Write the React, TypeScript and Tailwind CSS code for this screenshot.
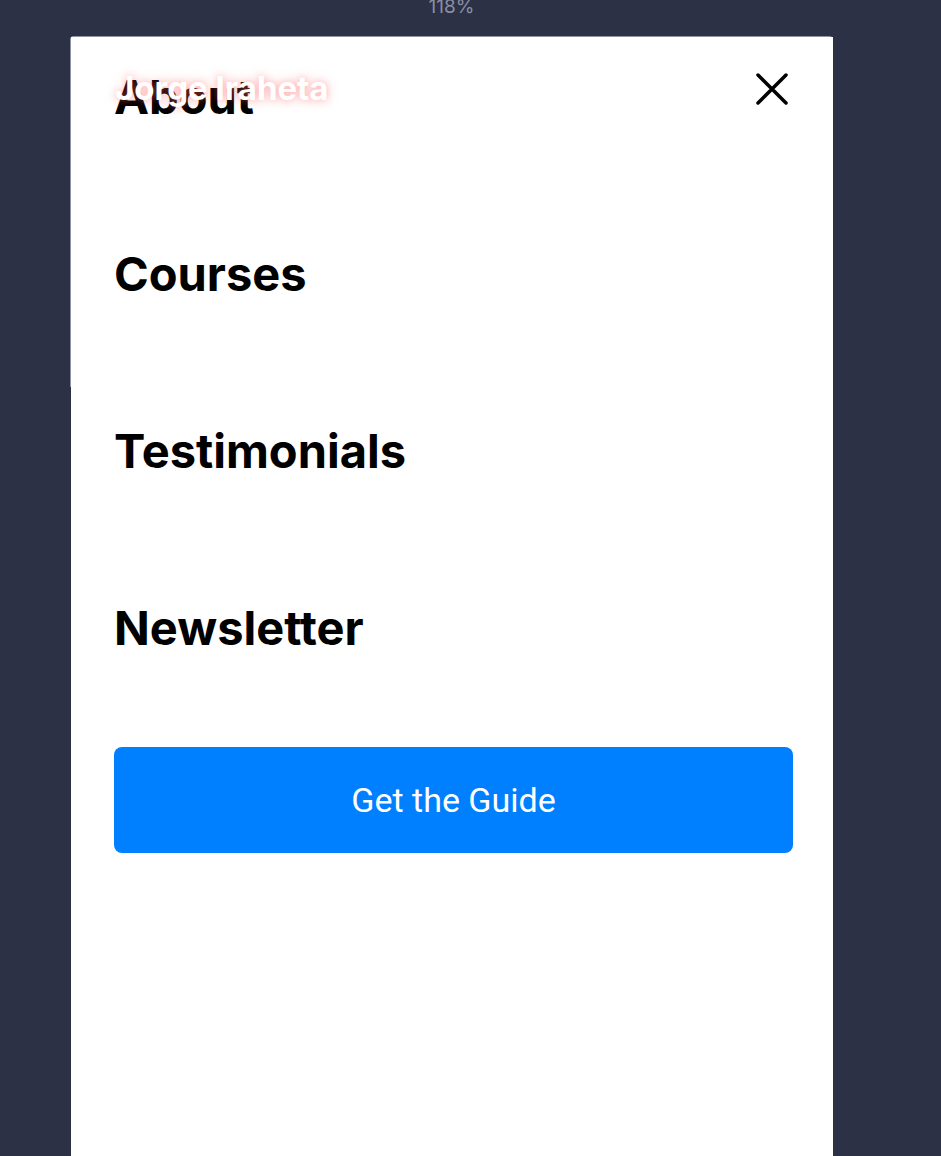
import React from "react";

export default function App() {
  const items = ["About", "Courses", "Testimonials", "Newsletter"];
  return (
    <div className="h-[1156px] w-full bg-[#2c3146] overflow-hidden relative" style={{ fontFamily: "Inter, 'Noto Sans', sans-serif" }}>
      <div className="h-[36px] flex justify-center pr-[38px]">
        <span className="text-[19px] leading-[19px] text-[#8a8fa3] -mt-[3px]">118%</span>
      </div>
      <div className="relative ml-[70px] w-[763px] h-[351px] rounded-t-[4px] border border-b-0 border-[#8d93a5] bg-white">
        <div className="absolute left-0 top-0 w-[762px] h-[1200px] bg-white pl-[43px] pr-[40px] pt-[32px]">
          <nav className="flex flex-col gap-[121px]">
            {items.map((t) => (
              <div key={t} className="text-[47px] leading-[56px] font-bold text-black">{t}</div>
            ))}
          </nav>
          <button className="mt-[91px] w-full h-[106px] rounded-[8px] bg-[#0080ff] text-white text-[34px]" style={{ fontFamily: "Roboto, sans-serif" }}>
            Get the Guide
          </button>
        </div>
        <div
          className="absolute left-[44px] top-[31px] text-[33px] leading-[40px] font-bold text-white"
          style={{ textShadow: "0 0 12px rgba(255,70,70,0.35), 0 0 6px rgba(255,120,120,0.35)" }}
        >
          Jorge Iraheta
        </div>
        <svg className="absolute left-[684px] top-[35px]" width="34" height="34" viewBox="0 0 34 34" fill="none" stroke="black" strokeWidth="3.5" strokeLinecap="round">
          <path d="M3 3 L31 31 M31 3 L3 31" />
        </svg>
      </div>
    </div>
  );
}
